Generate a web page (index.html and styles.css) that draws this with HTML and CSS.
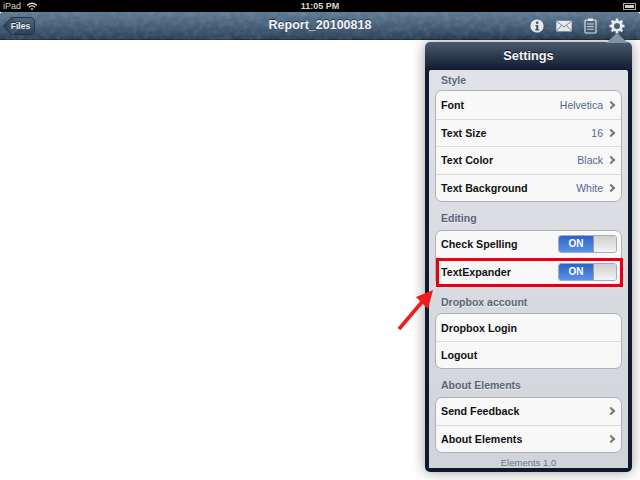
FILE: index.html
```html
<!DOCTYPE html>
<html lang="en">
<head>
  <meta charset="UTF-8">
  <title>Report_20100818</title>
  <link rel="stylesheet" href="styles.css">
</head>
<body>
  <div class="status-bar">
    <div class="status-left">
      <span>iPad</span>
      <svg class="wifi" width="12" height="9" viewBox="0 0 12 9">
        <path d="M1 3.4C4 .8 8 .8 11 3.4" fill="none" stroke="#d8d8d8" stroke-width="1.3"/>
        <path d="M2.8 5.2C4.8 3.6 7.2 3.6 9.2 5.2" fill="none" stroke="#d8d8d8" stroke-width="1.3"/>
        <path d="M4.6 6.9L6 5.9 7.4 6.9 6 8.3z" fill="#d8d8d8"/>
      </svg>
    </div>
    <div class="status-time">11:05 PM</div>
    <div class="battery"><div class="battery-level"></div></div>
  </div>

  <header class="nav-bar">
    <svg class="nav-grain" width="640" height="28">
      <filter id="grain">
        <feTurbulence type="fractalNoise" baseFrequency="0.16 0.2" numOctaves="4" seed="9"/>
        <feColorMatrix values="0 0 0 0 0.85  0 0 0 0 0.9  0 0 0 0 0.95  1.1 0 0 0 -0.4"/>
      </filter>
      <rect width="640" height="28" filter="url(#grain)" opacity="0.2"/>
    </svg>
    <button class="back-btn"><span>Files</span></button>
    <div class="nav-title">Report_20100818</div>
    <div class="nav-icons">
      <svg width="14" height="14" viewBox="0 0 14 14">
        <circle cx="7" cy="7" r="6.6" fill="#e6e9ec"/>
        <circle cx="7.2" cy="3.7" r="1.3" fill="#3d5266"/>
        <path d="M5.4 5.9H8.2V10.3H9.2V11.4H5.2V10.3H6.2V7H5.4z" fill="#3d5266"/>
      </svg>
      <svg width="16" height="12" viewBox="0 0 16 12">
        <rect x=".3" y=".8" width="15.4" height="10.6" fill="#e6e9ec"/>
        <path d="M.3 1L8 7 15.7 1M.3 11.2L5.6 5.4M15.7 11.2L10.4 5.4" fill="none" stroke="#5a6f82" stroke-width=".8"/>
      </svg>
      <svg width="13" height="16" viewBox="0 0 13 16">
        <rect x="1" y="2" width="11" height="13" rx="1" fill="none" stroke="#e6e9ec" stroke-width="1.1"/>
        <rect x="4" y=".5" width="5" height="2.5" fill="#e6e9ec"/>
        <path d="M3.2 6H9.8M3.2 8.6H9.8M3.2 11.2H9.8" stroke="#e6e9ec" stroke-width=".9"/>
      </svg>
      <svg width="16" height="16" viewBox="0 0 16 16">
        <circle cx="8" cy="8" r="4.4" fill="none" stroke="#e8ebee" stroke-width="2.8"/>
        <path d="M8 .5V3M8 13V15.5M.5 8H3M13 8H15.5M2.7 2.7L4.5 4.5M11.5 11.5L13.3 13.3M13.3 2.7L11.5 4.5M4.5 11.5L2.7 13.3" stroke="#e8ebee" stroke-width="2.6"/>
      </svg>
    </div>
  </header>

  <main class="document"></main>

  <div class="popover-arrow"></div>
  <aside class="popover">
    <div class="popover-title">Settings</div>
    <div class="popover-body">
      <div class="section-label">Style</div>
      <div class="group group-tall">
        <div class="row"><span class="row-name">Font</span><span class="row-value">Helvetica</span><span class="chevron"></span></div>
        <div class="row"><span class="row-name">Text Size</span><span class="row-value">16</span><span class="chevron"></span></div>
        <div class="row"><span class="row-name">Text Color</span><span class="row-value">Black</span><span class="chevron"></span></div>
        <div class="row"><span class="row-name">Text Background</span><span class="row-value">White</span><span class="chevron"></span></div>
      </div>

      <div class="section-label">Editing</div>
      <div class="group">
        <div class="row"><span class="row-name">Check Spelling</span><div class="switch"><span class="switch-on">ON</span><span class="switch-knob"></span></div></div>
        <div class="row"><span class="row-name">TextExpander</span><div class="switch"><span class="switch-on">ON</span><span class="switch-knob"></span></div></div>
      </div>

      <div class="section-label">Dropbox account</div>
      <div class="group">
        <div class="row"><span class="row-name">Dropbox Login</span></div>
        <div class="row"><span class="row-name">Logout</span></div>
      </div>

      <div class="section-label">About Elements</div>
      <div class="group">
        <div class="row"><span class="row-name">Send Feedback</span><span class="chevron"></span></div>
        <div class="row"><span class="row-name">About Elements</span><span class="chevron"></span></div>
      </div>

      <div class="version">Elements 1.0</div>
    </div>
  </aside>

  <!-- annotation added over the screenshot -->
  <div class="highlight-box"></div>
  <svg class="red-arrow" width="40" height="46" viewBox="0 0 40 46">
    <path d="M3 42L26 15" stroke="#ee1c1c" stroke-width="3.6" fill="none"/>
    <path d="M37 3L32 22 20 10z" fill="#ee1c1c"/>
  </svg>
</body>
</html>
```

FILE: styles.css
```css
* {
  box-sizing: border-box;
  margin: 0;
  padding: 0;
}

html,
body {
  width: 640px;
  height: 480px;
  overflow: hidden;
}

body {
  position: relative;
  background: #fff;
  font-family: "Liberation Sans", Arial, sans-serif;
}

.status-bar {
  height: 12px;
  background: #000;
  color: #d4d4d4;
  font-size: 9px;
  line-height: 12px;
  display: grid;
  grid-template-columns: 1fr auto 1fr;
  padding: 0 3px;
}

.status-left {
  display: flex;
  align-items: center;
  gap: 5px;
}

.status-time {
  font-weight: bold;
}

.battery {
  justify-self: end;
  align-self: center;
  width: 13px;
  height: 7px;
  border: 1px solid #aaa;
  padding: 1px;
  margin-right: 1px;
}

.battery-level {
  height: 100%;
  background: #ccc;
}

.nav-bar {
  position: relative;
  height: 28px;
  background: linear-gradient(#5d7b94, #475f77 50%, #2c4259);
  border-bottom: 1px solid #1c2c3e;
  border-radius: 3px 3px 0 0;
  display: flex;
  align-items: center;
  padding: 0 15px 0 11px;
}

.nav-grain {
  position: absolute;
  left: 0;
  top: 0;
}

.back-btn {
  position: relative;
  width: 24px;
  height: 18px;
  border: 1px solid #223548;
  border-left: 0;
  border-radius: 0 5px 5px 0;
  background: linear-gradient(#50687f, #2b4158);
  color: #f0f0f0;
  font-family: inherit;
  font-size: 8.5px;
  font-weight: bold;
  text-shadow: 0 -1px 0 #1c2c3e;
}

/* pointed left end of the back button */
.back-btn::before {
  content: "";
  position: absolute;
  left: -6px;
  top: 1.5px;
  width: 13px;
  height: 13px;
  border-left: 1px solid #223548;
  border-bottom: 1px solid #223548;
  border-radius: 0 0 0 3px;
  background: linear-gradient(45deg, #2b4158, #50687f);
  transform: rotate(45deg);
}

.back-btn span {
  position: relative;
  left: -2px;
}

.nav-title {
  position: absolute;
  left: 0;
  right: 0;
  top: 6px;
  text-align: center;
  color: #f2f4f6;
  font-size: 12.5px;
  font-weight: bold;
  line-height: 15px;
  text-shadow: 0 -1px 0 #24374a;
}

.nav-icons {
  position: relative;
  margin-left: auto;
  display: flex;
  align-items: center;
  gap: 12px;
}

.document {
  height: 440px;
  background: #fff;
}

.popover {
  position: absolute;
  left: 425px;
  top: 42px;
  width: 207px;
  height: 430px;
  padding: 0 4px 4px;
  border-radius: 5px;
  background: linear-gradient(#4b5a6e, #101b2f 28px, #0f1a2c);
  box-shadow: 0 0 14px rgba(0, 0, 0, 0.4);
}

.popover-arrow {
  position: absolute;
  left: 606px;
  top: 33px;
  width: 0;
  height: 0;
  border-left: 11px solid transparent;
  border-right: 11px solid transparent;
  border-bottom: 10px solid #8493a4;
  z-index: 1;
}

.popover-title {
  height: 28px;
  color: #f2f4f6;
  font-size: 12.8px;
  font-weight: bold;
  line-height: 28px;
  text-align: center;
  text-shadow: 0 -1px 0 #0b1220;
}

.popover-body {
  height: 398px;
  padding: 0 6px;
  border-radius: 2px 2px 0 0;
  background: linear-gradient(#e0e2e7, #d1d4da);
  overflow: hidden;
}

.section-label {
  height: 21.5px;
  padding: 4px 0 0 6px;
  color: #5a6478;
  font-size: 10.5px;
  font-weight: bold;
  line-height: 13px;
  text-shadow: 0 1px 0 #eee;
}

.section-label:first-child {
  height: 20px;
}

.group {
  margin-bottom: 6px;
  border: 1px solid #aeb1b7;
  border-radius: 7px;
  background: #f8f8f8;
}

.row {
  height: 27px;
  display: flex;
  align-items: center;
  padding: 0 5px;
  border-top: 1px solid #dadada;
}

.group-tall .row {
  height: 27.5px;
}

.row:first-child {
  border-top: 0;
}

.row-name {
  margin-right: auto;
  color: #111;
  font-size: 10.7px;
  font-weight: bold;
}

.row-value {
  color: #4f6792;
  font-size: 10.5px;
}

.chevron {
  width: 6px;
  height: 6px;
  margin: 0 2px 0 5px;
  border-top: 2px solid #777;
  border-right: 2px solid #777;
  transform: rotate(45deg);
}

.switch {
  width: 59px;
  height: 18px;
  display: flex;
  margin-right: -1px;
  border: 1px solid #a8abb0;
  border-radius: 3px;
  overflow: hidden;
}

.switch-on {
  width: 34px;
  background: linear-gradient(#2a64c4, #5b93ea);
  color: #fff;
  font-size: 10px;
  font-weight: bold;
  line-height: 16px;
  text-align: center;
}

.switch-knob {
  flex: 1;
  border-left: 1px solid #9a9a9a;
  background: linear-gradient(#cfcfcf, #f4f4f4);
}

.version {
  color: #6d7482;
  font-size: 9.5px;
  line-height: 10px;
  text-align: center;
  margin-top: -1px;
}

.highlight-box {
  position: absolute;
  left: 436px;
  top: 258px;
  width: 187px;
  height: 29px;
  border: 3px solid #e8000e;
}

.red-arrow {
  position: absolute;
  left: 396px;
  top: 287px;
}
```
